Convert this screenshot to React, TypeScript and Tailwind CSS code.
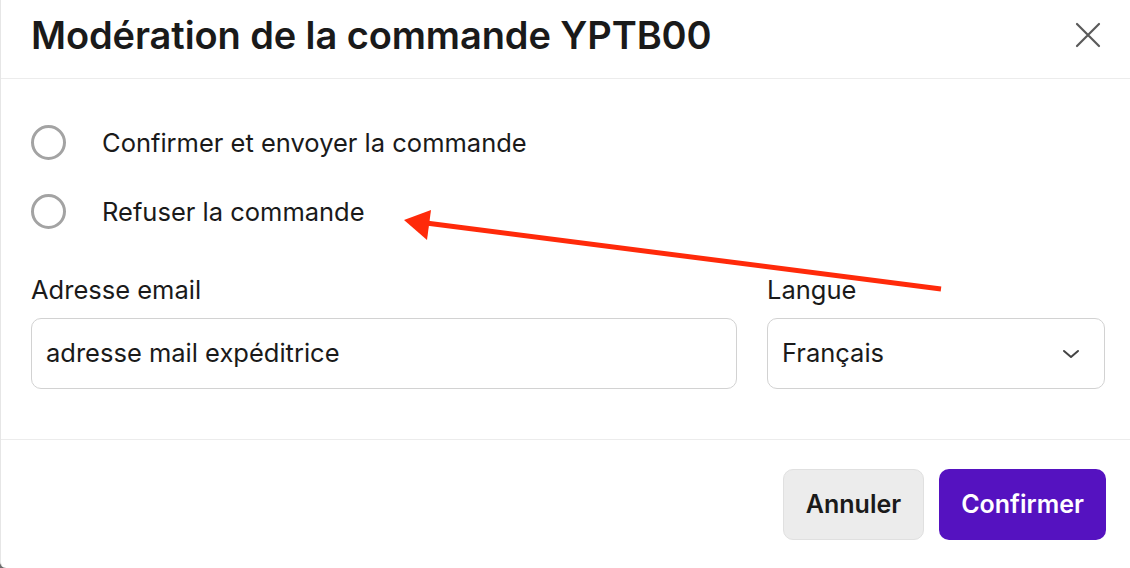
import React from "react";

export default function App() {
  return (
    <div className="w-[1130px] h-[568px] bg-[#6b6b6b] overflow-hidden" style={{ fontFamily: "Inter, 'Noto Sans', sans-serif" }}>
      <div className="relative w-[1130px] h-[568px] bg-white border-l border-[#e6e6e6] rounded-bl-[6px] flex flex-col text-[#1a1a1a]">
        <div className="h-[79px] flex items-center justify-between pl-[30px] pr-[22px] border-b border-[#ececec] shrink-0">
          <h1 className="text-[38px] font-semibold tracking-[-0.1px] mt-[-8px]">Modération de la commande YPTB00</h1>
          <button className="w-[40px] h-[40px] flex items-center justify-center mt-[-8px]">
            <svg width="28" height="28" viewBox="0 0 28 28" fill="none" stroke="#5a5a5a" strokeWidth="2.2" strokeLinecap="round">
              <path d="M3 3 L25 25 M25 3 L3 25" />
            </svg>
          </button>
        </div>
        <div className="flex flex-col pl-[30px] pr-[24px] pt-[46px] h-[361px] border-b border-[#ececec] shrink-0">
          <div className="flex flex-col gap-[35px]">
            <label className="flex items-center h-[34px]">
              <span className="w-[35px] h-[35px] rounded-full border-[3px] border-[#a3a3a3] shrink-0" />
              <span className="ml-[36px] text-[25.5px] mt-[2px]">Confirmer et envoyer la commande</span>
            </label>
            <label className="flex items-center h-[34px]">
              <span className="w-[35px] h-[35px] rounded-full border-[3px] border-[#a3a3a3] shrink-0" />
              <span className="ml-[36px] text-[25.5px] mt-[2px]">Refuser la commande</span>
            </label>
          </div>
          <div className="flex gap-[30px] mt-[47px]">
            <div className="flex flex-col w-[706px] shrink-0">
              <span className="text-[25.5px] leading-[30px]">Adresse email</span>
              <div className="mt-[13px] h-[71px] rounded-[10px] border border-[#d2d2d2] flex items-center px-[14px] text-[25.5px]">
                adresse mail expéditrice
              </div>
            </div>
            <div className="flex flex-col w-[338px] shrink-0">
              <span className="text-[25.5px] leading-[30px]">Langue</span>
              <div className="mt-[13px] h-[71px] rounded-[10px] border border-[#d2d2d2] flex items-center justify-between pl-[14px] pr-[24px] text-[25.5px]">
                <span>Français</span>
                <svg width="18" height="10" viewBox="0 0 18 10" fill="none" stroke="#444" strokeWidth="2" strokeLinecap="round" strokeLinejoin="round">
                  <path d="M2 2 L9 8 L16 2" />
                </svg>
              </div>
            </div>
          </div>
        </div>
        <div className="flex justify-end gap-[15px] pr-[24px] pt-[29px]">
          <button className="w-[141px] h-[71px] rounded-[10px] bg-[#ececec] border border-[#e0e0e0] text-[25px] font-semibold text-[#1a1a1a]">Annuler</button>
          <button className="w-[167px] h-[71px] rounded-[10px] bg-[#5512c0] text-[25px] font-semibold text-white">Confirmer</button>
        </div>
        <svg className="absolute left-0 top-0 pointer-events-none" width="1130" height="568">
          <line x1="940" y1="289" x2="425" y2="223" stroke="#ff2a0a" strokeWidth="5" />
          <polygon points="403,220 430,210 426,240" fill="#ff2a0a" />
        </svg>
      </div>
    </div>
  );
}
